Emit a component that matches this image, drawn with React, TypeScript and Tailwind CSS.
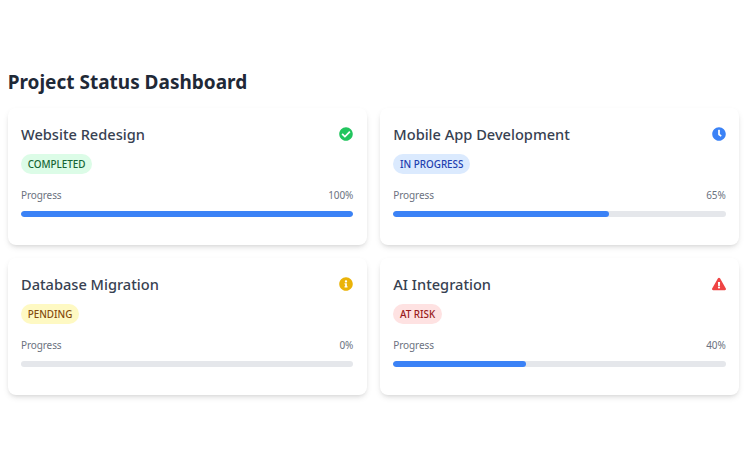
import { FaCheckCircle, FaClock, FaInfoCircle, FaExclamationTriangle } from "react-icons/fa";

const projects = [
  { name: "Website Redesign", status: "COMPLETED", badge: "bg-[#dcfce7] text-[#166534]", progress: 100, icon: <FaCheckCircle className="text-[14px] text-[#22c55e]" /> },
  { name: "Mobile App Development", status: "IN PROGRESS", badge: "bg-[#dbeafe] text-[#1e40af]", progress: 65, icon: <FaClock className="text-[14px] text-[#3b82f6]" /> },
  { name: "Database Migration", status: "PENDING", badge: "bg-[#fef9c3] text-[#854d0e]", progress: 0, icon: <FaInfoCircle className="text-[14px] text-[#eab308]" /> },
  { name: "AI Integration", status: "AT RISK", badge: "bg-[#fee2e2] text-[#991b1b]", progress: 40, icon: <FaExclamationTriangle className="text-[14px] text-[#ef4444]" /> },
];

export default function App() {
  return (
    <div className="min-h-[469px] bg-white pt-[69px] pl-[7.67px] pr-[11px] font-['Noto_Sans',sans-serif]">
      <h1 className="mb-[12.33px] text-[19px] leading-[27px] font-bold text-[#1f2937]">Project Status Dashboard</h1>
      <div className="grid grid-cols-2 gap-[13.33px]">
        {projects.map((p) => (
          <div key={p.name} className="h-[136.67px] rounded-lg bg-white p-[13.33px] shadow-[0_3px_6px_-1px_rgba(0,0,0,0.12),0_2px_4px_-2px_rgba(0,0,0,0.1)]">
            <div className="mb-[8.33px] flex items-center justify-between">
              <h3 className="text-[14.6px] leading-[24px] font-medium text-[#374151]">{p.name}</h3>
              {p.icon}
            </div>
            <span className={`block w-fit rounded-full px-[6.67px] text-[9.9px] leading-[20px] font-medium ${p.badge}`}>{p.status}</span>
            <div className="mt-[13px] mb-[7.67px] flex justify-between text-[10px] leading-[16px] tracking-[-0.1px] text-[#6b7280]">
              <span>Progress</span>
              <span>{p.progress}%</span>
            </div>
            <div className="h-[6.67px] overflow-hidden rounded-full bg-[#e5e7eb]">
              <div className="h-full rounded-full bg-[#3b82f6]" style={{ width: `${p.progress}%` }} />
            </div>
          </div>
        ))}
      </div>
    </div>
  );
}
